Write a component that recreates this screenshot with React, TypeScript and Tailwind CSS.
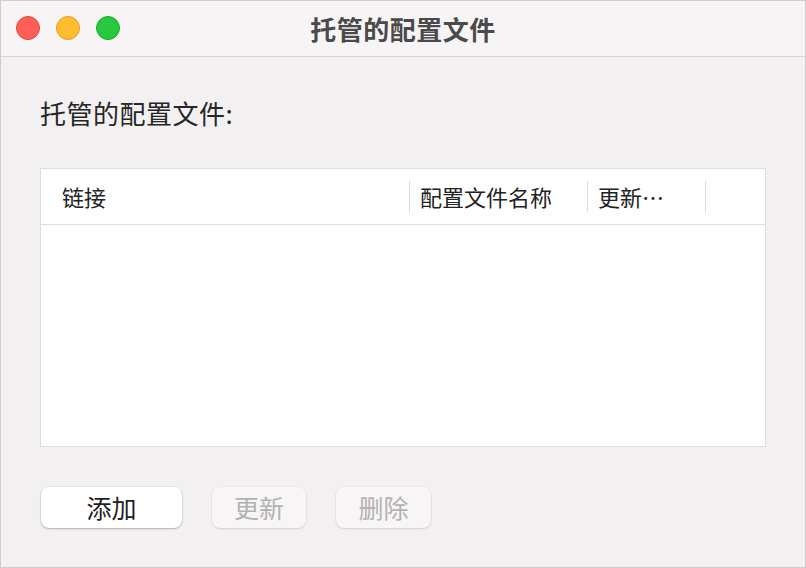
import React from "react";

const font = { fontFamily: '"Noto Sans CJK SC", "Noto Sans", sans-serif' };

function TrafficLights() {
  return (
    <div className="absolute left-[15px] top-[15px] flex gap-[16px]">
      <span className="block w-[24px] h-[24px] rounded-full bg-[#fe5f57] border border-[#e2463f]" />
      <span className="block w-[24px] h-[24px] rounded-full bg-[#febc2e] border border-[#e1a116]" />
      <span className="block w-[24px] h-[24px] rounded-full bg-[#28c840] border border-[#1aab29]" />
    </div>
  );
}

function Divider() {
  return <span className="block w-px h-[31px] bg-[#dcdcdc]" />;
}

export default function App() {
  return (
    <div
      className="w-[806px] h-[568px] bg-[#f3f0f1] border border-[#cfcccf] overflow-hidden flex flex-col"
      style={font}
    >
      {/* title bar */}
      <div className="relative h-[56px] shrink-0 bg-[#f7f4f6] border-b border-[#d6d3d5] flex items-center justify-center">
        <TrafficLights />
        <span className="text-[26px] font-bold text-[#4a4a4a] tracking-[0.5px] leading-none">
          托管的配置文件
        </span>
      </div>

      <div className="flex-1 px-[39px] pt-[38px]">
        <div className="h-[34px] flex items-center text-[26px] text-[#262626] tracking-[0.5px]">
          托管的配置文件:
        </div>

        <div className="mt-[39px] h-[279px] bg-white border border-[#dedcdd] flex flex-col">
          <div className="h-[56px] shrink-0 border-b border-[#dedcdd] flex items-center text-[22px] text-[#222]">
            <div className="w-[368px] pl-[21px]">链接</div>
            <Divider />
            <div className="w-[177px] pl-[10px]">配置文件名称</div>
            <Divider />
            <div className="w-[117px] pl-[10px]">更新…</div>
            <Divider />
          </div>
        </div>

        <div className="mt-[40px] ml-[1px] flex gap-[30px] text-[25px]">
          <button className="w-[141px] h-[41px] rounded-[8px] bg-white text-[#1f1f1f] shadow-[0_1px_2px_rgba(0,0,0,0.25),0_0_0_0.5px_rgba(0,0,0,0.08)] flex items-center justify-center">
            添加
          </button>
          <button className="w-[94px] h-[41px] rounded-[8px] bg-[#f7f5f6] text-[#b3b1b2] shadow-[0_1px_2px_rgba(0,0,0,0.12),0_0_0_0.5px_rgba(0,0,0,0.05)] flex items-center justify-center">
            更新
          </button>
          <button className="w-[95px] h-[41px] rounded-[8px] bg-[#f7f5f6] text-[#b3b1b2] shadow-[0_1px_2px_rgba(0,0,0,0.12),0_0_0_0.5px_rgba(0,0,0,0.05)] flex items-center justify-center">
            删除
          </button>
        </div>
      </div>
    </div>
  );
}
